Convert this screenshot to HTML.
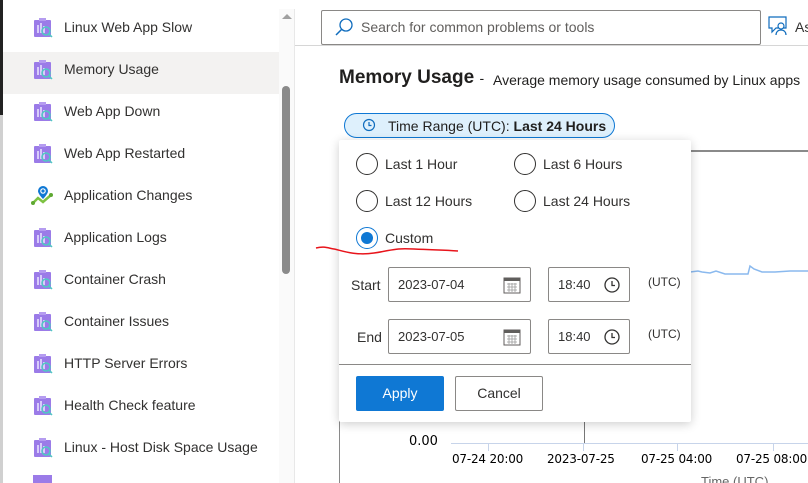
<!DOCTYPE html>
<html style="width:808px;height:483px;overflow:hidden"><head><meta charset="utf-8"><style>
*{margin:0;padding:0;box-sizing:border-box}
body{width:808px;height:483px;overflow:hidden;background:#fff;font-family:"Segoe UI","Liberation Sans",sans-serif;color:#323130;position:relative;font-size:14px}
.a{position:absolute;white-space:nowrap}
.item{position:absolute;left:3px;width:276px;height:42px}
.item span{position:absolute;left:61px;top:13px;font-size:14px;color:#323130;white-space:nowrap}
.ic{position:absolute;left:30px;top:11px}
.radio{position:absolute;width:22px;height:22px;border:1.5px solid #323130;border-radius:50%}
.lbl{position:absolute;font-size:14px;color:#323130;white-space:nowrap}
.inp{position:absolute;border:1px solid #8a8886;border-radius:2px;height:35px;font-size:13px;padding:9px 0 0 9px}
.tick{position:absolute;top:443px;width:1px;height:8px;background:#c7d4ea}
.xl{position:absolute;top:452px;font-size:12px;color:#000;font-family:"DejaVu Sans","Liberation Sans",sans-serif;letter-spacing:-0.2px;white-space:nowrap}
</style></head><body>
<div class="a" style="left:0;top:0;width:3px;height:115px;background:#222"></div>
<div class="a" style="left:0;top:115px;width:3px;height:368px;background:#d0d0d0"></div>
<div class="a" style="left:3px;top:52px;width:276px;height:42px;background:#f3f2f1"></div>
<div class="a" style="left:279px;top:9px;width:15px;height:474px;background:#fafafa"></div>
<div class="a" style="left:282px;top:14px;width:0;height:0;border-left:5px solid transparent;border-right:5px solid transparent;border-bottom:5px solid #a0a0a0"></div>
<div class="a" style="left:282px;top:86px;width:8px;height:188px;background:#8a8a8a;border-radius:4px"></div>
<div class="a" style="left:294px;top:9px;width:1px;height:474px;background:#e8e8e8"></div>

<svg width="0" height="0" style="position:absolute"><defs>
<g id="pi"><rect x="1" y="3" width="17" height="17" rx="1" fill="#9b7be8"/><rect x="6" y="1" width="7" height="3" fill="#b59cf0"/><rect x="4" y="8" width="2" height="8" fill="#d8cdfa"/><rect x="7" y="6" width="2" height="10" fill="#d8cdfa"/><rect x="10" y="9" width="2" height="7" fill="#d8cdfa"/><circle cx="13" cy="14" r="4" fill="none" stroke="#4fc9c3" stroke-width="1.5"/><line x1="16" y1="17" x2="19" y2="20" stroke="#4fc9c3" stroke-width="1.5"/></g>
</defs></svg>

<div class="item" style="top:6px"><svg class="ic" width="20" height="22"><use href="#pi"/></svg><span>Linux Web App Slow</span></div>
<div class="item" style="top:48px"><svg class="ic" width="20" height="22"><use href="#pi"/></svg><span>Memory Usage</span></div>
<div class="item" style="top:90px"><svg class="ic" width="20" height="22"><use href="#pi"/></svg><span>Web App Down</span></div>
<div class="item" style="top:132px"><svg class="ic" width="20" height="22"><use href="#pi"/></svg><span>Web App Restarted</span></div>
<div class="item" style="top:174px"><svg class="ic" width="22" height="22" style="left:28px"><polyline points="2,18 7,13 12,17 20,10" fill="none" stroke="#7dc242" stroke-width="2.5"/><circle cx="2" cy="18" r="2" fill="#5ea832"/><circle cx="20" cy="10" r="2" fill="#5ea832"/><path d="M12 1a5 5 0 0 1 5 5c0 3-5 8-5 8s-5-5-5-8a5 5 0 0 1 5-5z" fill="#0f78d4"/><circle cx="12" cy="6" r="2.2" fill="none" stroke="#fff" stroke-width="1.2"/></svg><span>Application Changes</span></div>
<div class="item" style="top:216px"><svg class="ic" width="20" height="22"><use href="#pi"/></svg><span>Application Logs</span></div>
<div class="item" style="top:258px"><svg class="ic" width="20" height="22"><use href="#pi"/></svg><span>Container Crash</span></div>
<div class="item" style="top:300px"><svg class="ic" width="20" height="22"><use href="#pi"/></svg><span>Container Issues</span></div>
<div class="item" style="top:342px"><svg class="ic" width="20" height="22"><use href="#pi"/></svg><span>HTTP Server Errors</span></div>
<div class="item" style="top:384px"><svg class="ic" width="20" height="22"><use href="#pi"/></svg><span>Health Check feature</span></div>
<div class="item" style="top:426px"><svg class="ic" width="20" height="22"><use href="#pi"/></svg><span>Linux - Host Disk Space Usage</span></div>
<div class="a" style="left:33px;top:475px;width:19px;height:8px;background:#9b7be8"></div>

<!-- main -->
<div class="a" style="left:321px;top:10px;width:440px;height:35px;border:1px solid #8a8886;border-radius:2px"></div>
<svg class="a" style="left:334px;top:17px" width="20" height="20"><circle cx="12" cy="8" r="6" fill="none" stroke="#0f6cbd" stroke-width="1.3"/><line x1="7.5" y1="12.5" x2="2" y2="18" stroke="#0f6cbd" stroke-width="1.5"/></svg>
<div class="a" style="left:361px;top:19px;font-size:14px;color:#605e5c">Search for common problems or tools</div>
<div class="a" style="left:295px;top:45px;width:513px;height:1px;background:#d6d6d6"></div>
<svg class="a" style="left:768px;top:16px" width="22" height="20"><path d="M1 1h17v11H8l-4 4v-4H1z" fill="none" stroke="#0f6cbd" stroke-width="1.2"/><circle cx="13" cy="10" r="3" fill="#fff" stroke="#0f6cbd" stroke-width="1.2"/><path d="M8 19c0-3 2-5 5-5s5 2 5 5" fill="#fff" stroke="#0f6cbd" stroke-width="1.2"/></svg>
<div class="a" style="left:795px;top:19px;font-size:14px">As</div>

<div class="a" style="left:339px;top:67px;font-size:19px;font-weight:600;color:#201f1e">Memory Usage <span style="font-weight:400;font-size:14px">-</span></div>
<div class="a" style="left:493px;top:72px;font-size:14px;color:#201f1e">Average memory usage consumed by Linux apps</div>

<div class="a" style="left:344px;top:113px;width:271px;height:25px;border:1px solid #0f78d4;border-radius:13px;background:#def0fc"></div>
<svg class="a" style="left:362px;top:118px" width="14" height="14"><circle cx="7" cy="7" r="5.5" fill="none" stroke="#0f6cbd" stroke-width="1.2"/><path d="M7 4v3.5h2.5" fill="none" stroke="#0f6cbd" stroke-width="1.2"/></svg>
<div class="a" style="left:388px;top:118px;font-size:14px;color:#201f1e">Time Range (UTC): <b style="font-weight:600">Last 24 Hours</b></div>

<!-- chart background -->
<div class="a" style="left:690px;top:150px;width:118px;height:2px;background:#8a8a8a"></div>
<div class="a" style="left:339px;top:420px;width:1px;height:63px;background:#8a8a8a"></div>
<svg class="a" style="left:690px;top:260px" width="118" height="20"><polyline points="0,12 8,11 12,12 20,13 26,11 35,14 48,14 58,14 60,6 64,9 72,12 85,12 100,11 118,11" fill="none" stroke="#8ab9ee" stroke-width="1.5"/></svg>
<div class="a" style="left:409px;top:434px;font-size:13px;font-family:'DejaVu Sans','Liberation Sans',sans-serif;color:#000">0.00</div>
<div class="a" style="left:451px;top:443px;width:357px;height:1px;background:#c7d4ea"></div>
<div class="a" style="left:584px;top:420px;width:1px;height:23px;background:#777"></div>
<div class="tick" style="left:488px"></div><div class="tick" style="left:583px"></div><div class="tick" style="left:677px"></div><div class="tick" style="left:773px"></div>
<div class="xl" style="left:452px">07-24 20:00</div>
<div class="xl" style="left:547px">2023-07-25</div>
<div class="xl" style="left:641px">07-25 04:00</div>
<div class="xl" style="left:736px">07-25 08:00</div>
<div class="a" style="left:701px;top:474px;font-size:13px;color:#666">Time (UTC)</div>

<!-- popup -->
<div class="a" style="left:339px;top:140px;width:352px;height:282px;background:#fff;box-shadow:0 2px 10px rgba(0,0,0,.2);border-radius:2px"></div>
<div class="radio" style="left:356px;top:153px"></div><div class="lbl" style="left:385px;top:156px">Last 1 Hour</div>
<div class="radio" style="left:514px;top:153px"></div><div class="lbl" style="left:543px;top:156px">Last 6 Hours</div>
<div class="radio" style="left:356px;top:190px"></div><div class="lbl" style="left:385px;top:193px">Last 12 Hours</div>
<div class="radio" style="left:514px;top:190px"></div><div class="lbl" style="left:543px;top:193px">Last 24 Hours</div>
<div class="radio" style="left:356px;top:227px;border-color:#0f78d4"></div><div class="a" style="left:361px;top:232px;width:12px;height:12px;border-radius:50%;background:#0f78d4"></div>
<div class="lbl" style="left:385px;top:230px">Custom</div>
<svg class="a" style="left:314px;top:244px" width="146" height="16"><path d="M2 4C10 2 14 4 20 5S40 12 60 9 80 4 100 5 130 6 144 7" fill="none" stroke="#e8141b" stroke-width="1.5"/></svg>

<div class="lbl" style="left:351px;top:277px">Start</div>
<div class="inp" style="left:388px;top:267px;width:143px">2023-07-04</div>
<div class="inp" style="left:548px;top:267px;width:82px">18:40</div>
<div class="lbl" style="left:357px;top:329px">End</div>
<div class="inp" style="left:388px;top:319px;width:143px">2023-07-05</div>
<div class="inp" style="left:548px;top:319px;width:82px">18:40</div>
<svg class="a" style="left:503px;top:276px" width="18" height="18"><rect x="1" y="2" width="16" height="15" fill="none" stroke="#605e5c"/><rect x="1" y="2" width="16" height="3" fill="#605e5c"/><path d="M4 8h10M4 11h10M4 14h10M6 7v9M9 7v9M12 7v9" stroke="#999" stroke-width=".8"/></svg>
<svg class="a" style="left:503px;top:328px" width="18" height="18"><rect x="1" y="2" width="16" height="15" fill="none" stroke="#605e5c"/><rect x="1" y="2" width="16" height="3" fill="#605e5c"/><path d="M4 8h10M4 11h10M4 14h10M6 7v9M9 7v9M12 7v9" stroke="#999" stroke-width=".8"/></svg>
<svg class="a" style="left:603px;top:276px" width="18" height="18"><circle cx="9" cy="9" r="7" fill="none" stroke="#323130" stroke-width="1.3"/><path d="M9 5v4.5h3" fill="none" stroke="#323130" stroke-width="1.3"/></svg>
<svg class="a" style="left:603px;top:328px" width="18" height="18"><circle cx="9" cy="9" r="7" fill="none" stroke="#323130" stroke-width="1.3"/><path d="M9 5v4.5h3" fill="none" stroke="#323130" stroke-width="1.3"/></svg>
<div class="a" style="left:648px;top:275px;font-size:12px">(UTC)</div>
<div class="a" style="left:648px;top:327px;font-size:12px">(UTC)</div>

<div class="a" style="left:339px;top:364px;width:352px;height:1px;background:#8a8886"></div>
<div class="a" style="left:356px;top:376px;width:88px;height:35px;background:#0f78d4;border-radius:2px;color:#fff;font-size:14px;text-align:center;line-height:35px">Apply</div>
<div class="a" style="left:455px;top:376px;width:88px;height:35px;border:1px solid #8a8886;border-radius:2px;font-size:14px;text-align:center;line-height:33px">Cancel</div>
</body></html>
